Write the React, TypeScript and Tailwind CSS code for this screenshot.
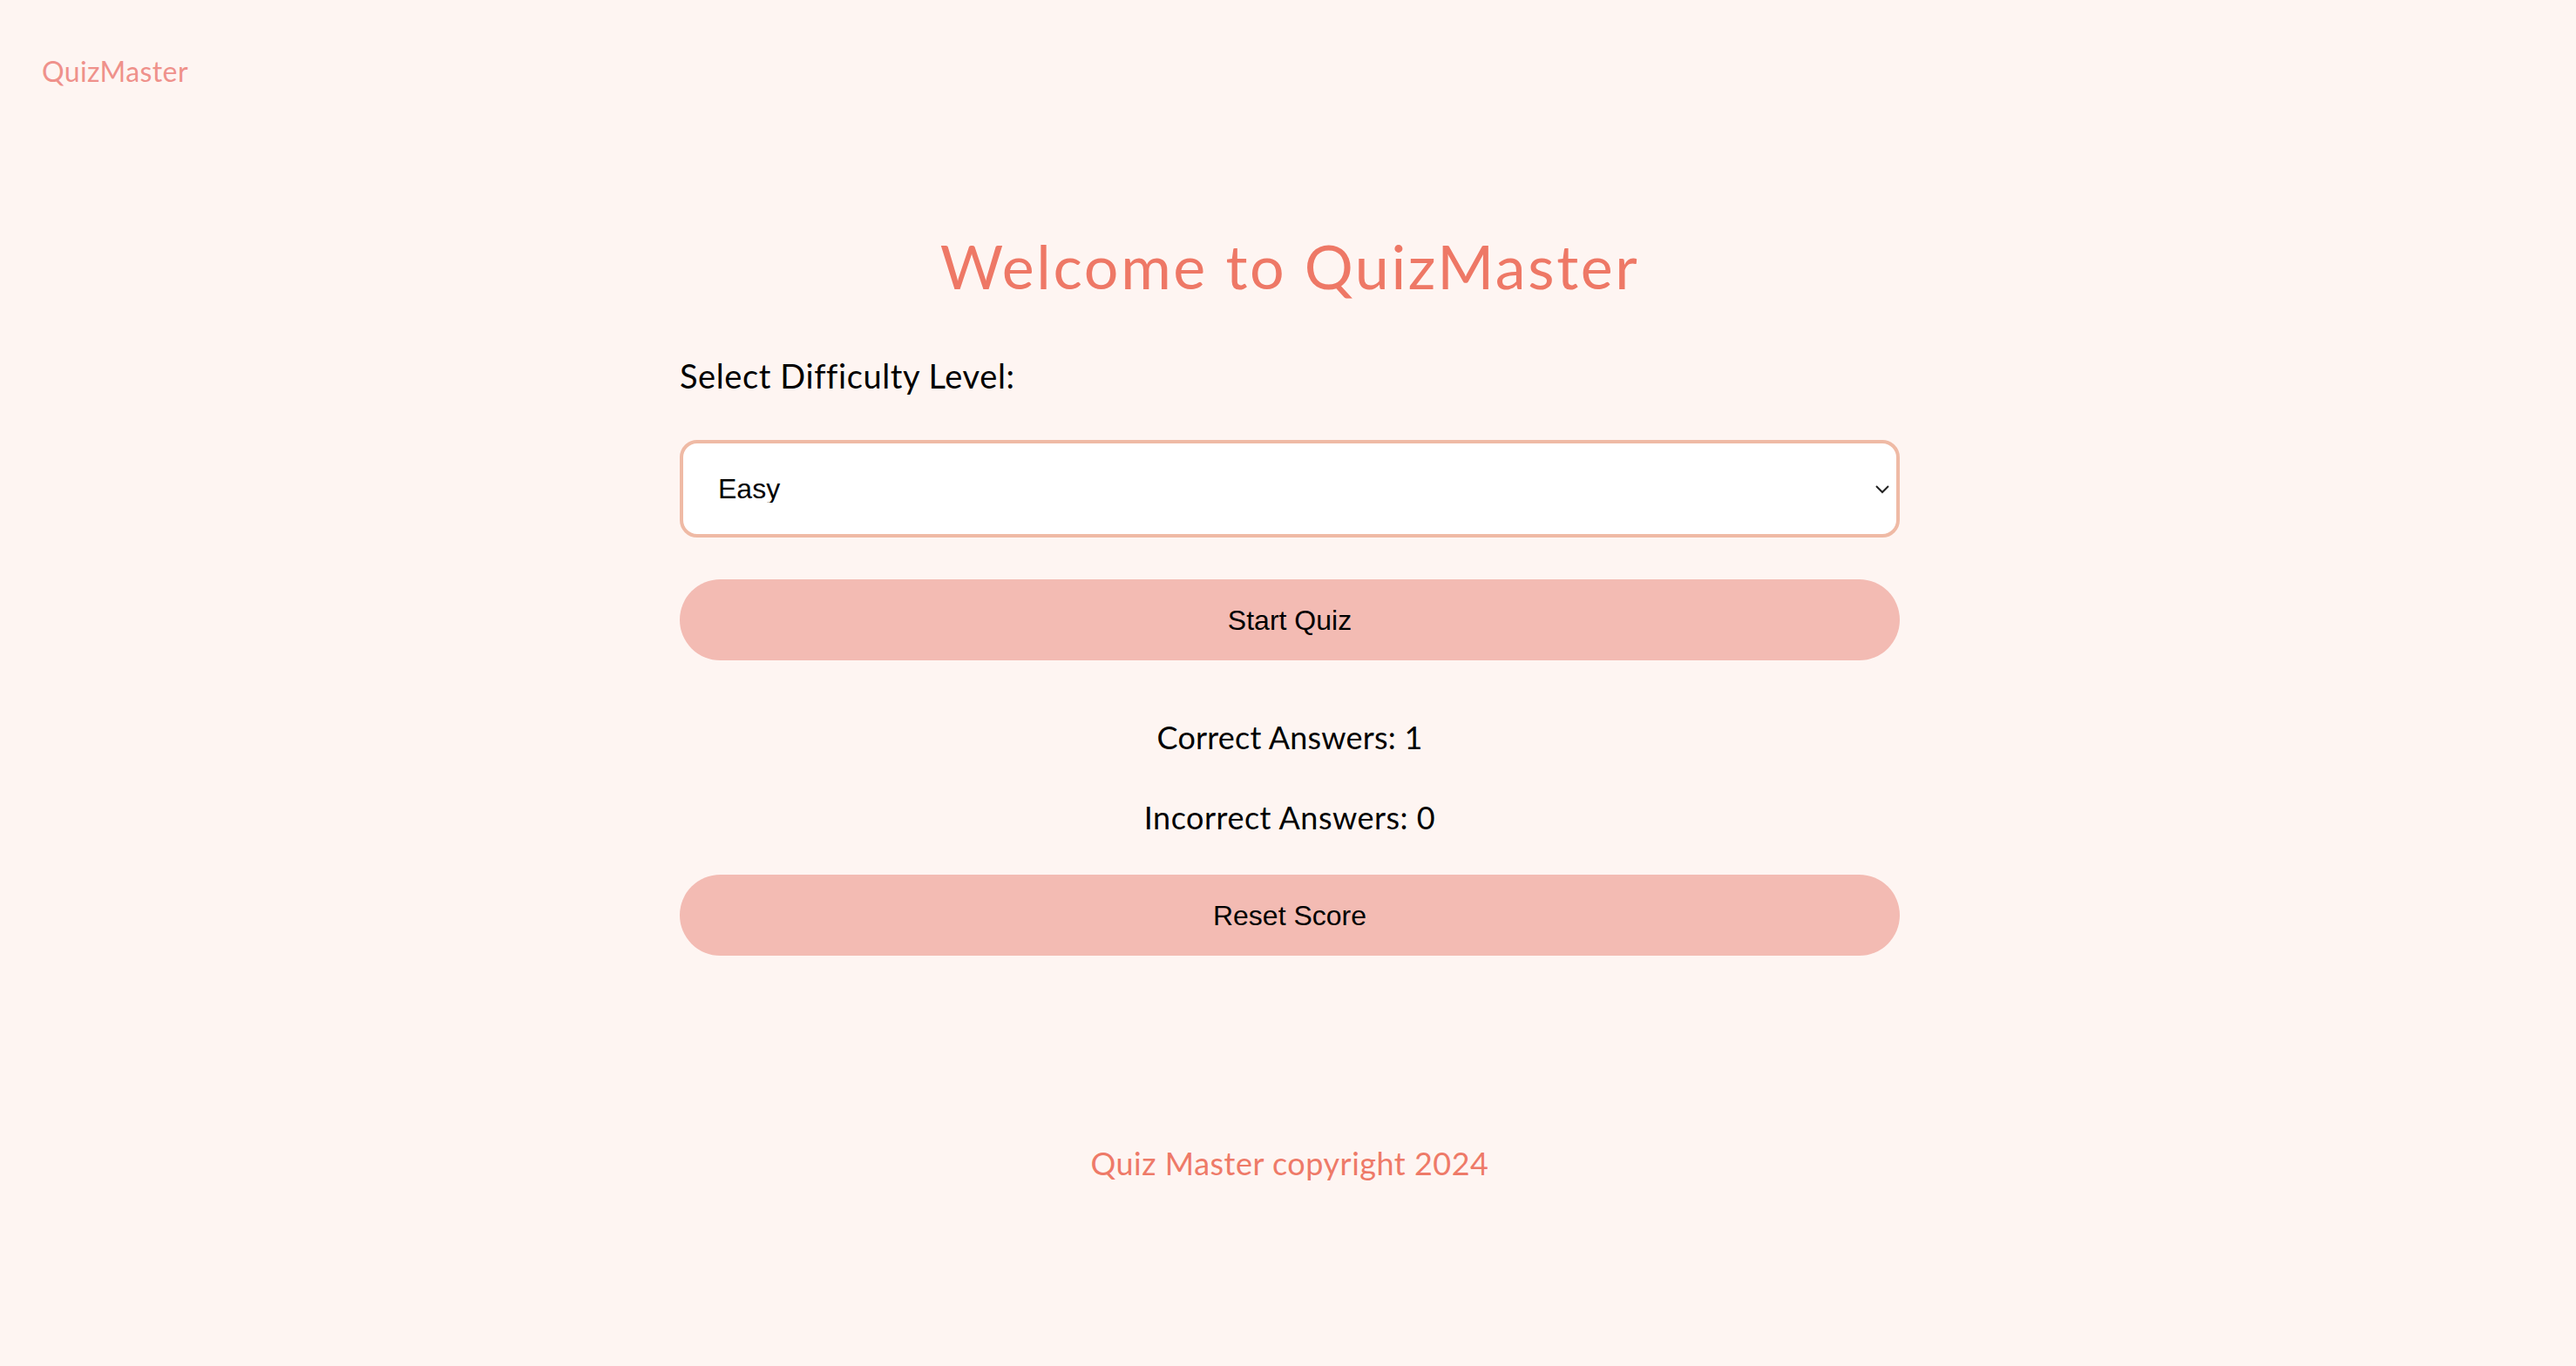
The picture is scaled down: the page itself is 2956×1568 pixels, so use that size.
import React from "react";

const quick = "font-['Lato','Noto_Sans',sans-serif]";
const arial = "font-['Liberation_Sans',Arial,sans-serif]";

export default function App() {
    return (
        <div className={`min-h-[1568px] bg-[#FEF5F2] flex flex-col ${quick}`}>
            {/* Header */}
            <header className="pt-[66px] pl-[48px]">
                <span className="text-[32px] leading-none tracking-[0.4px] text-[#EF918B]">QuizMaster</span>
            </header>

            {/* Main */}
            <main className="w-[1400px] mx-auto translate-x-[2px] flex flex-col">
                <h1 className="mt-[170px] text-center text-[70px] leading-none font-normal tracking-[2.6px] text-[#EE7866]">
                    Welcome to QuizMaster
                </h1>

                <label className="mt-[72px] text-[38px] leading-none tracking-[0.6px] text-black">Select Difficulty Level:</label>

                <div className="relative mt-[55px]">
                    <select
                        defaultValue="easy"
                        className={`w-full h-[112px] appearance-none bg-white border-4 border-[#EFBAA5] rounded-[20px] pl-[40px] text-[32px] leading-none text-black outline-none ${arial}`}
                    >
                        <option value="easy">Easy</option>
                        <option value="medium">Medium</option>
                        <option value="hard">Hard</option>
                    </select>
                    <svg
                        className="absolute right-[11px] top-1/2 -translate-y-1/2 pointer-events-none"
                        width="18" height="12" viewBox="0 0 18 12" fill="none"
                    >
                        <path d="M2 3l7 7 7-7" stroke="#222" strokeWidth="2" />
                    </svg>
                </div>

                <button className={`mt-[48px] h-[93px] rounded-full bg-[#F3BBB3] text-[32px] leading-none text-black ${arial}`}>
                    Start Quiz
                </button>

                <p className="mt-[70px] text-center text-[36px] leading-none tracking-[0.2px] text-black">Correct Answers: 1</p>
                <p className="mt-[56px] text-center text-[36px] leading-none tracking-[0.5px] text-black">Incorrect Answers: 0</p>

                <button className={`mt-[48px] h-[93px] rounded-full bg-[#F3BBB3] text-[32px] leading-none text-black ${arial}`}>
                    Reset Score
                </button>

                {/* Footer */}
                <footer className="mt-[220px] text-center text-[36px] leading-none tracking-[0.5px] text-[#EE7A68]">
                    Quiz Master copyright 2024
                </footer>
            </main>
        </div>
    );
}
